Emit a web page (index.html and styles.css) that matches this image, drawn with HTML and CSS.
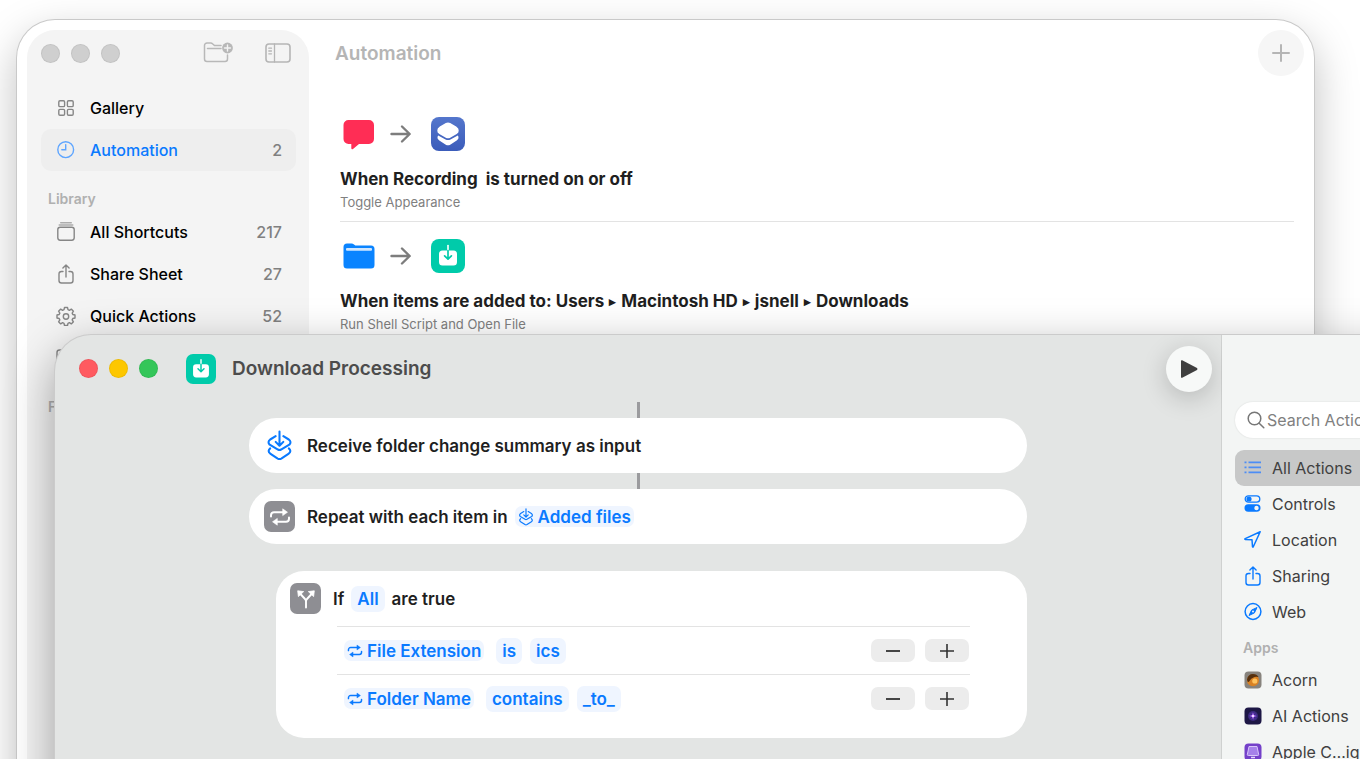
FILE: index.html
```html
<!DOCTYPE html>
<html lang="en">
<head>
    <meta charset="UTF-8">
    <meta name="viewport" content="width=device-width, initial-scale=1.0">
    <title>Shortcuts</title>
    <link rel="stylesheet" href="styles.css">
</head>
<body>
    <!-- Shared icons -->
    <svg class="sprite" aria-hidden="true">
        <symbol id="download" viewBox="0 0 34 34">
            <path d="M11.500 11.500h11a3.500 3.500 0 0 1 3.500 3.500v8a3.500 3.500 0 0 1-3.500 3.500h-11A3.500 3.500 0 0 1 8 23v-8a3.500 3.500 0 0 1 3.500-3.500z" fill="#fff"/>
            <path d="M17 6.500v5" stroke="#fff" stroke-width="1.600" stroke-linecap="round"/>
            <path d="M17 11.500v8M13.600 16.800l3.400 3.400 3.400-3.400" fill="none" stroke="#00cbaa" stroke-width="1.700" stroke-linecap="round" stroke-linejoin="round"/>
        </symbol>
        <symbol id="arrow" viewBox="0 0 22 20">
            <path d="M1.500 10h18M12 2.500l7.700 7.500-7.700 7.500" fill="none" stroke="currentColor" stroke-width="2.400" stroke-linecap="round" stroke-linejoin="round"/>
        </symbol>
        <symbol id="repeat" viewBox="0 0 22 20">
            <path d="M2 9.500V8.200a3 3 0 0 1 3-3h9.500M20 10.500v1.300a3 3 0 0 1-3 3H7.500" fill="none" stroke="currentColor" stroke-width="2" stroke-linecap="round"/>
            <path d="M13.700 1.800v6.800l4.800-3.400zM8.300 11.400v6.800l-4.800-3.400z" fill="currentColor" stroke="currentColor" stroke-width=".6" stroke-linejoin="round"/>
        </symbol>
        <symbol id="input" viewBox="0 0 24 30">
            <g fill="none" stroke="currentColor" stroke-width="2" stroke-linecap="round" stroke-linejoin="round">
                <path d="M12 1.500v13.500M8.300 11.500l3.700 3.700 3.700-3.700"/>
                <path d="M8.300 6L3 9.200q-3 2.300-.5 5l8 4.700q1.500.8 3 0l8-4.700q2.500-2.700-.5-5L15.700 6"/>
                <path d="M3 17.800q-3 2.500 0 5l7.300 4.800q1.700 1 3.400 0l7.300-4.800q3-2.500 0-5"/>
            </g>
        </symbol>
        <symbol id="share" viewBox="0 0 20 20">
            <path d="M7 7.500H5.500a2.500 2.500 0 0 0-2.500 2.500v6.500a2.500 2.500 0 0 0 2.500 2.500h9a2.500 2.500 0 0 0 2.500-2.500V10a2.500 2.500 0 0 0-2.500-2.500H13M10 13V1.200M6.900 4l3.100-3 3.100 3" fill="none" stroke="currentColor" stroke-width="1.400" stroke-linecap="round" stroke-linejoin="round"/>
        </symbol>
        <symbol id="plus" viewBox="0 0 20 20">
            <path d="M10 2v16M2 10h16" stroke="currentColor" stroke-width="2" stroke-linecap="round"/>
        </symbol>
    </svg>

    <!-- Automation window -->
    <div class="window library">
        <aside class="sidebar">
            <div class="sidebar-top">
                <div class="lights inactive"><i></i><i></i><i></i></div>
                <div class="tools">
                    <button class="tool" aria-label="New Folder">
                        <svg width="30" height="22" viewBox="0 0 30 22">
                            <path d="M18 3.500h-6.500l-2-1.800q-.7-.7-1.700-.7H4a2.500 2.500 0 0 0-2.500 2.500V17A2.500 2.500 0 0 0 4 19.500h18a2.500 2.500 0 0 0 2.500-2.500v-4M4.500 6.500H18" fill="none" stroke="#b8b8b8" stroke-width="1.500" stroke-linecap="round"/>
                            <circle cx="24.500" cy="6" r="5.400" fill="#b8b8b8"/>
                            <path d="M24.500 3v6M21.500 6h6" stroke="#f4f4f4" stroke-width="1.400" stroke-linecap="round"/>
                        </svg>
                    </button>
                    <button class="tool" aria-label="Toggle Sidebar">
                        <svg width="26" height="20" viewBox="0 0 26 20">
                            <rect x="1" y="1" width="24" height="18" rx="3" fill="none" stroke="#b5b5b5" stroke-width="1.600"/>
                            <path d="M9.500 1v18M3.800 5.200h2.700M3.800 8h2.700M3.800 10.800h2.700" stroke="#b5b5b5" stroke-width="1.300" stroke-linecap="round"/>
                        </svg>
                    </button>
                </div>
            </div>
            <nav>
                <a class="side-item" href="#">
                    <svg width="20" height="20" viewBox="0 0 20 20" fill="none" stroke="currentColor" stroke-width="1.400"><rect x="2.800" y="2.800" width="5.800" height="5.800" rx="1.200"/><rect x="11.400" y="2.800" width="5.800" height="5.800" rx="1.200"/><rect x="2.800" y="11.400" width="5.800" height="5.800" rx="1.200"/><rect x="11.400" y="11.400" width="5.800" height="5.800" rx="1.200"/></svg>
                    <span>Gallery</span>
                </a>
                <a class="side-item selected" href="#">
                    <svg width="20" height="20" viewBox="0 0 20 20" fill="none" stroke="currentColor" stroke-width="1.400" stroke-linecap="round"><circle cx="9.700" cy="9.700" r="7.900"/><path d="M9.700 4.600v5.100H5.800"/></svg>
                    <span>Automation</span><em>2</em>
                </a>
                <h2>Library</h2>
                <a class="side-item" href="#">
                    <svg width="20" height="20" viewBox="0 0 20 20" fill="none" stroke="currentColor" stroke-width="1.400"><rect x="1.800" y="5.200" width="16.400" height="13" rx="2.400"/><path d="M3.200 3h13.600M4.700 .8h10.600" stroke-linecap="round" opacity=".65"/></svg>
                    <span>All Shortcuts</span><em>217</em>
                </a>
                <a class="side-item" href="#">
                    <svg width="20" height="20"><use href="#share"/></svg>
                    <span>Share Sheet</span><em>27</em>
                </a>
                <a class="side-item" href="#">
                    <svg width="20" height="20" viewBox="0 0 20 20" fill="none" stroke="currentColor" stroke-width="1.400" stroke-linejoin="round"><path d="M8.500 1.500h3l.5 2.200 1.400.6 1.900-1.200 2.100 2.100-1.200 1.900.6 1.400 2.200.5v3l-2.200.5-.6 1.400 1.200 1.900-2.100 2.100-1.900-1.200-1.400.6-.5 2.200h-3l-.5-2.200-1.400-.6-1.900 1.200-2.100-2.100 1.200-1.900-.6-1.400L1 12V9l2.200-.5.600-1.400-1.200-1.900 2.100-2.100 1.900 1.200L8 3.700z"/><circle cx="10" cy="10.500" r="2.700"/></svg>
                    <span>Quick Actions</span><em>52</em>
                </a>
                <a class="side-item" href="#">
                    <svg width="20" height="20" viewBox="0 0 20 20" fill="none" stroke="currentColor" stroke-width="1.400"><rect x="1" y="2" width="18" height="14" rx="2.500"/></svg>
                </a>
                <h2>Folders</h2>
            </nav>
        </aside>

        <main class="automations">
            <header>
                <h1>Automation</h1>
                <button class="round-button" aria-label="Add"><svg width="20" height="20"><use href="#plus"/></svg></button>
            </header>
            <article class="automation">
                <div class="flow">
                    <svg width="32" height="32" viewBox="0 0 32 32"><path d="M5.500 2h20.500a5 5 0 0 1 5 5v14a5 5 0 0 1-5 5H16l-6 5q-1.500 1-1.700-.7V26H5.500a5 5 0 0 1-5-5V7a5 5 0 0 1 5-5z" fill="#ff2d55"/></svg>
                    <svg class="arrow" width="22" height="20"><use href="#arrow"/></svg>
                    <span class="app-icon appearance">
                        <svg width="34" height="34" viewBox="0 0 34 34" fill="#fff"><path d="M14.800 6q2.200-1.100 4.400 0l6 3.400q2.800 1.800 2.500 4.200.3 2.200-2 3.500l-6.500 3.700q-2.200 1.100-4.400 0l-6.500-3.700q-2.300-1.300-2-3.500-.3-2.400 2.500-4.200z"/><path d="M7.200 18.400l7.300 4q2.500 1.200 5 0l7.300-4q1.900 2.800-1.100 5l-6.500 4.300q-2.200 1.300-4.400 0l-6.500-4.300q-3-2.200-1.100-5z"/></svg>
                    </span>
                </div>
                <h3>When Recording&nbsp; is turned on or off</h3>
                <p>Toggle Appearance</p>
            </article>
            <article class="automation">
                <div class="flow">
                    <svg width="32" height="32" viewBox="0 0 32 32"><path d="M4 3.500h4.500q1.500 0 2.500.9l1.300 1.200H28a3.500 3.500 0 0 1 3.500 3.500V25a3.500 3.500 0 0 1-3.500 3.500H4A3.500 3.500 0 0 1 .5 25V7A3.500 3.500 0 0 1 4 3.500z" fill="#0a84ff"/><rect x="3" y="8" width="26" height="2.800" rx="1" fill="#cfe6ff"/></svg>
                    <svg class="arrow" width="22" height="20"><use href="#arrow"/></svg>
                    <span class="app-icon"><svg width="34" height="34"><use href="#download"/></svg></span>
                </div>
                <h3>When items are added to: Users <b>▸</b> Macintosh HD <b>▸</b> jsnell <b>▸</b> Downloads</h3>
                <p>Run Shell Script and Open File</p>
            </article>
        </main>
    </div>

    <!-- Shortcut editor window -->
    <div class="window editor">
        <section class="canvas">
            <header class="editor-top">
                <div class="lights"><i class="red"></i><i class="yellow"></i><i class="green"></i></div>
                <span class="app-icon small"><svg width="30" height="30"><use href="#download"/></svg></span>
                <h1>Download Processing</h1>
                <button class="round-button play" aria-label="Run"><svg width="20" height="20" viewBox="0 0 20 20"><path d="M2 2v16q0 1.200 1.200.7L18 10.900q1-.9 0-1.800L3.200 1.300Q2 .8 2 2z" fill="#3f3f3f"/></svg></button>
            </header>
            <div class="steps">
                <div class="connector"></div>
                <div class="step">
                    <svg class="step-icon blue" width="30" height="30"><use href="#input"/></svg>
                    <span>Receive folder change summary as input</span>
                </div>
                <div class="connector"></div>
                <div class="step">
                    <span class="step-icon gray"><svg width="22" height="20"><use href="#repeat"/></svg></span>
                    <span>Repeat with each item in</span>
                    <button class="variable"><svg width="16" height="18"><use href="#input"/></svg>Added files</button>
                </div>
                <div class="condition">
                    <div class="condition-top">
                        <span class="step-icon gray"><svg width="22" height="22" viewBox="0 0 22 22"><path d="M11 19.500v-6.200q0-1.400-1-2.300L5 5.500M11 13.300q0-1.400 1-2.300l5-5.500" fill="none" stroke="#fff" stroke-width="1.900" stroke-linecap="round" stroke-linejoin="round"/><path d="M2.700 2.800l6 .8-5.300 5zM19.300 2.800l-6 .8 5.300 5z" fill="#fff" stroke="#fff" stroke-width=".8" stroke-linejoin="round"/></svg></span>
                        <span>If</span>
                        <button class="token">All</button>
                        <span>are true</span>
                    </div>
                    <div class="rule">
                        <button class="variable"><svg width="16" height="16"><use href="#repeat"/></svg>File Extension</button>
                        <button class="token">is</button>
                        <button class="token">ics</button>
                        <div class="rule-buttons">
                            <button aria-label="Remove"><svg width="14" height="14" viewBox="0 0 14 14"><path d="M0 7h14" stroke="#333" stroke-width="1.800"/></svg></button>
                            <button aria-label="Add"><svg width="14" height="14" viewBox="0 0 14 14"><path d="M0 7h14M7 0v14" stroke="#333" stroke-width="1.600"/></svg></button>
                        </div>
                    </div>
                    <div class="rule">
                        <button class="variable"><svg width="16" height="16"><use href="#repeat"/></svg>Folder Name</button>
                        <button class="token">contains</button>
                        <button class="token">_to_</button>
                        <div class="rule-buttons">
                            <button aria-label="Remove"><svg width="14" height="14" viewBox="0 0 14 14"><path d="M0 7h14" stroke="#333" stroke-width="1.800"/></svg></button>
                            <button aria-label="Add"><svg width="14" height="14" viewBox="0 0 14 14"><path d="M0 7h14M7 0v14" stroke="#333" stroke-width="1.600"/></svg></button>
                        </div>
                    </div>
                </div>
            </div>
        </section>

        <aside class="actions">
            <label class="search">
                <svg width="18" height="18" viewBox="0 0 18 18" fill="none" stroke="#777" stroke-width="1.500" stroke-linecap="round"><circle cx="7.500" cy="7.500" r="6.300"/><path d="M12.200 12.200l4.600 4.600"/></svg>
                <input type="search" placeholder="Search Actions" aria-label="Search Actions">
            </label>
            <nav>
                <a class="action selected" href="#"><svg width="20" height="20" viewBox="0 0 20 20" stroke="currentColor" stroke-width="1.800"><path d="M5.500 4.300H18M5.500 9.300H18M5.500 14.300H18M1.500 4.300h2M1.500 9.300h2M1.500 14.300h2"/></svg>All Actions</a>
                <a class="action" href="#"><svg width="20" height="20" viewBox="0 0 20 20"><rect x="2.200" y="1.800" width="14.600" height="6.400" rx="3.200" fill="none" stroke="currentColor" stroke-width="1.300"/><circle cx="6" cy="5" r="2.600" fill="currentColor"/><rect x="1.500" y="10.300" width="16" height="7.400" rx="3.700" fill="currentColor"/><circle cx="13.500" cy="14" r="2.200" fill="#f3f5f4"/></svg>Controls</a>
                <a class="action" href="#"><svg width="20" height="20" viewBox="0 0 20 20" fill="none" stroke="currentColor" stroke-width="1.500" stroke-linejoin="round"><path d="M17.200 1.800L2.200 8.600q-.8.500 0 .8l6.800.4.500 7q.3.700.8 0z"/></svg>Location</a>
                <a class="action" href="#"><svg width="20" height="20"><use href="#share"/></svg>Sharing</a>
                <a class="action" href="#"><svg width="20" height="20" viewBox="0 0 20 20" fill="none" stroke="currentColor"><circle cx="10" cy="9.500" r="7.900" stroke-width="1.500"/><path d="M14 5.500l-2.600 5.400L6 13.500l2.600-5.400z" fill="currentColor" stroke-linejoin="round"/><circle cx="10" cy="9.500" r="1" fill="#f3f5f4" stroke="none"/></svg>Web</a>
                <h2>Apps</h2>
                <a class="action" href="#"><svg width="20" height="20" viewBox="0 0 20 20"><rect x="1.500" y="1.500" width="17" height="17" rx="4" fill="#87837d"/><circle cx="10" cy="10.300" r="6" fill="#d98224"/><path d="M4 9.500Q5 4 10 4q4 0 5.500 3-3.500-.8-5 .5Q8 8 6.500 11q-.8 1.500-2 .5z" fill="#55300f"/><circle cx="11.800" cy="11" r="2.600" fill="#ffc35e"/></svg>Acorn</a>
                <a class="action" href="#"><svg width="20" height="20" viewBox="0 0 20 20"><rect x="1.500" y="1.500" width="17" height="17" rx="4" fill="#1d1745"/><circle cx="10" cy="10" r="5" fill="#3c2a80"/><circle cx="10" cy="10" r="3.200" fill="none" stroke="#6a48c4" stroke-width=".6" stroke-dasharray="1 1"/><path d="M10 6.500l1 2.500 2.500 1-2.500 1-1 2.500L9 11l-2.500-1L9 9z" fill="#b46cff"/><circle cx="10" cy="10" r="1" fill="#fff"/></svg>AI Actions</a>
                <a class="action" href="#"><svg width="20" height="20" viewBox="0 0 20 20"><rect x="1.500" y="1.500" width="17" height="17" rx="4" fill="#7440c9"/><path d="M6 4.500h8l1.700 8.200q0 .8-1 .8H5.300q-1 0-1-.8z" fill="#a681ea" stroke="#d8c6fa"/><path d="M8 15.500h4" stroke="#e4d8fb" stroke-width="1.500"/></svg>Apple C…igurator</a>
            </nav>
        </aside>
    </div>
</body>
</html>
```
FILE: styles.css
```css
* {
    box-sizing: border-box;
}

body {
    margin: 0;
    height: 100vh;
    overflow: hidden;
    position: relative;
    background: #fff;
    color: #1f1f1f;
    font-family: Inter, "Liberation Sans", sans-serif;
    font-size: 16px;
    line-height: 24px;
}

h1, h2, h3, p {
    margin: 0;
}

a {
    color: inherit;
    text-decoration: none;
}

button {
    border: none;
    padding: 0;
    background: none;
    color: inherit;
    font: inherit;
    cursor: pointer;
}

svg {
    display: block;
    flex: none;
}

.sprite {
    position: absolute;
    width: 0;
    height: 0;
}

/* Windows */
.window {
    position: absolute;
    display: flex;
    overflow: hidden;
}

.library {
    top: 20px;
    left: 17px;
    right: 46px;
    bottom: -60px;
    padding: 10px;
    border-radius: 38px;
    background: #fff;
    box-shadow: 0 0 0 1px #c9c9c9, 0 16px 44px rgba(0, 0, 0, 0.26);
}

.editor {
    top: 335px;
    left: 55px;
    right: -80px;
    bottom: -60px;
    border-radius: 36px;
    background: #e3e5e4;
    box-shadow: 0 0 0 1px #cbcbcb, 0 16px 48px rgba(0, 0, 0, 0.38);
}

.lights {
    display: flex;
    gap: 11px;
}

.lights i {
    width: 19px;
    height: 19px;
    border-radius: 50%;
    border: 1px solid rgba(0, 0, 0, 0.06);
}

.inactive i {
    background: #cfcfcf;
}

.red {
    background: #ff5a60;
}

.yellow {
    background: #fdc700;
}

.green {
    background: #34c659;
}

/* Sidebar */
.sidebar {
    flex: none;
    width: 282px;
    padding: 0 13px 0 14px;
    border-radius: 28px;
    background: #f4f4f4;
}

.sidebar-top {
    display: flex;
    align-items: center;
    justify-content: space-between;
    height: 46px;
    margin-bottom: 11px;
}

.tools {
    display: flex;
    align-items: center;
    gap: 32px;
    padding-right: 5px;
}

.side-item {
    display: flex;
    align-items: center;
    gap: 14px;
    height: 42px;
    padding: 0 14px 0 15px;
    border-radius: 10px;
    color: #000;
    font-weight: 500;
}

.side-item svg {
    color: #868686;
}

.side-item em {
    margin-left: auto;
    color: #808080;
    font-style: normal;
}

.side-item.selected {
    background: #eee;
    color: #0a7aff;
}

.side-item.selected svg {
    color: #5ea5ff;
}

.sidebar h2,
.actions h2 {
    color: #b0b0b0;
    font-size: 14px;
    font-weight: 600;
    line-height: 24px;
}

.sidebar h2 {
    padding: 16px 7px 0;
}

/* Automation list */
.automations {
    flex: 1;
    padding-left: 26px;
}

.automations header {
    display: flex;
    align-items: center;
    justify-content: space-between;
    height: 46px;
    margin-bottom: 24px;
}

.automations h1 {
    padding-top: 2px;
    color: #b5b5b5;
    font-size: 19px;
    font-weight: 600;
    line-height: 24px;
}

.round-button {
    display: flex;
    align-items: center;
    justify-content: center;
    width: 46px;
    height: 46px;
    border-radius: 50%;
    background: #f6f6f6;
    color: #b5b5b5;
}

.automation {
    height: 122px;
    margin: 0 10px 0 5px;
    padding-top: 17px;
    border-bottom: 1px solid #e3e3e3;
}

.flow {
    display: flex;
    align-items: center;
    margin-bottom: 16px;
    padding-left: 3px;
}

.arrow {
    margin: 0 19px 0 15px;
    color: #7d7d7d;
}

.app-icon {
    border-radius: 8px;
    background: #00cbaa;
}

.appearance {
    background: linear-gradient(#5476cc, #3b5cba);
}

.automation h3 {
    font-size: 17px;
    font-weight: 700;
    line-height: 24px;
}

.automation h3 b {
    margin: 0 1px;
    font-size: 13px;
    line-height: 13px;
    vertical-align: 1px;
}

.automation p {
    color: #808080;
    font-size: 13px;
    line-height: 22px;
}

/* Editor */
.canvas {
    flex: 1;
    border-right: 1px solid #cfd1d0;
    font-size: 17px;
    font-weight: 600;
}

.editor-top {
    display: flex;
    align-items: center;
    height: 67px;
    padding: 0 9px 0 24px;
}

.small {
    margin: 0 16px 0 28px;
    border-radius: 7px;
}

.editor-top h1 {
    color: #4c4c4c;
    font-size: 19px;
    font-weight: 600;
}

.play {
    margin-left: auto;
    background: #f7f9f8;
    box-shadow: 0 6px 26px rgba(0, 0, 0, 0.2);
}

.steps {
    max-width: 778px;
    margin: 0 auto;
}

.connector {
    width: 3px;
    height: 16px;
    margin: 0 auto;
    background: #9b9b9e;
}

.step {
    display: flex;
    align-items: center;
    gap: 7px;
    height: 55px;
    padding: 0 15px;
    border-radius: 28px;
    background: #fff;
}

.step-icon {
    display: flex;
    align-items: center;
    justify-content: center;
    width: 31px;
    height: 31px;
    margin-right: 5px;
    border-radius: 7px;
}

.blue {
    color: #0a7aff;
}

.gray {
    background: #8e8e93;
    color: #fff;
}

.variable,
.token {
    border-radius: 7px;
    background: #eff5ff;
    color: #0a7aff;
    font-weight: 600;
}

.variable {
    display: flex;
    align-items: center;
    gap: 4px;
    height: 21px;
    padding: 0 3px;
}

.token {
    height: 26px;
    padding: 0 6px;
}

.condition {
    margin: 27px 0 0 27px;
    padding: 0 57px 16px 14px;
    border-radius: 28px;
    background: #fff;
}

.condition-top {
    display: flex;
    align-items: center;
    gap: 7px;
    height: 55px;
}

.rule {
    display: flex;
    align-items: center;
    gap: 8px;
    height: 48px;
    margin-left: 47px;
    padding-left: 7px;
    border-top: 1px solid #e3e3e3;
}

.rule .variable {
    margin-right: 4px;
}

.rule-buttons {
    display: flex;
    gap: 10px;
    margin-left: auto;
    padding-right: 1px;
}

.rule-buttons button {
    display: flex;
    align-items: center;
    justify-content: center;
    width: 44px;
    height: 23px;
    border-radius: 7px;
    background: #ececec;
}

/* Action list */
.actions {
    flex: none;
    width: 218px;
    padding: 67px 13px 0;
    background: #f3f5f4;
    color: #404040;
}

.search {
    display: flex;
    align-items: center;
    height: 36px;
    margin-bottom: 12px;
    padding-left: 12px;
    border-radius: 18px;
    background: #fff;
    box-shadow: 0 0 2px rgba(0, 0, 0, 0.12);
}

.search input {
    width: 100%;
    border: none;
    outline: none;
    background: none;
    font: inherit;
}

.search input::placeholder {
    color: #808080;
}

.action {
    display: flex;
    align-items: center;
    gap: 9px;
    height: 36px;
    padding-left: 8px;
    border-radius: 9px;
    white-space: nowrap;
}

.action svg {
    color: #0a7aff;
}

.action.selected {
    background: #c7c8c8;
}

.action.selected svg {
    color: #4c8df5;
}

.actions h2 {
    padding: 6px 8px 2px;
}
```
